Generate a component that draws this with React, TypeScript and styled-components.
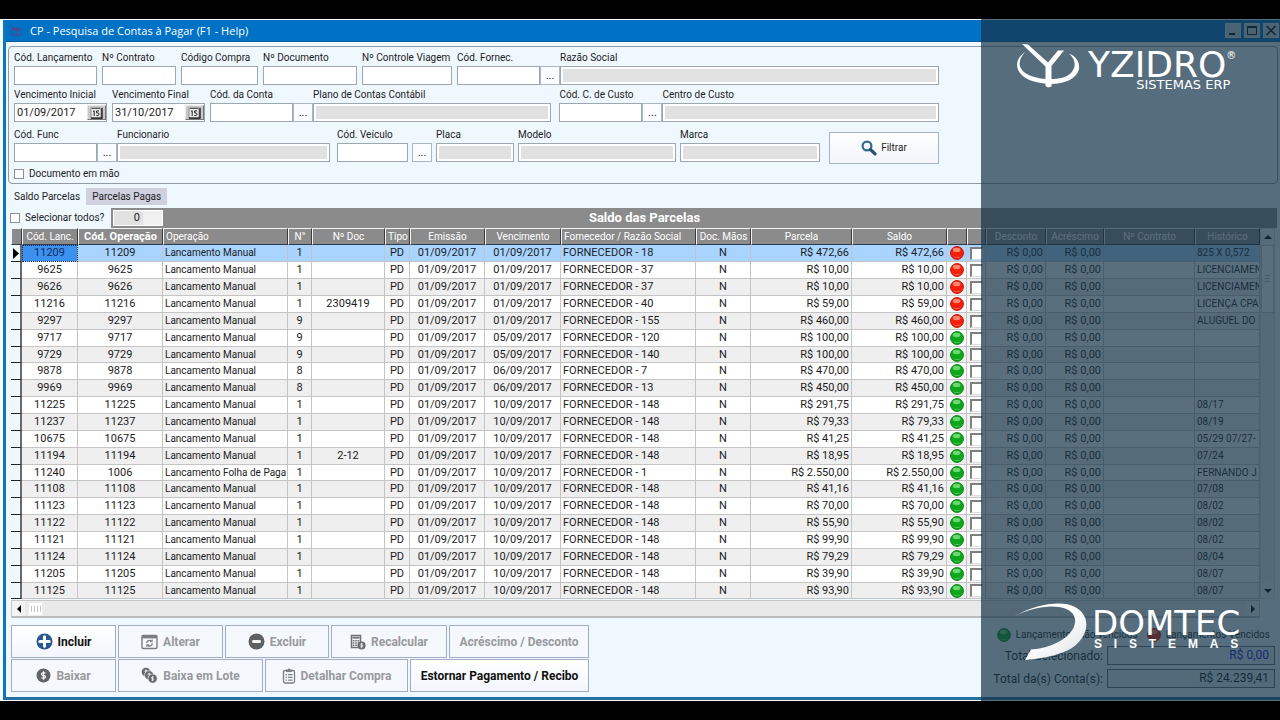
import React from 'react';
import styled, { createGlobalStyle, css } from 'styled-components';

const GlobalStyle = createGlobalStyle`
  * { box-sizing: border-box; }
  body {
    margin: 0;
    background: #000;
    color: #1c1c1c;
    font: 10px/14px Roboto, "Liberation Sans", sans-serif;
  }
  button, input { font: inherit; color: inherit; margin: 0; }
`;

const Stage = styled.main`
  position: relative;
  display: flex;
  min-height: 100vh;
  padding: 19px 0;
  overflow: hidden;
`;

const Window = styled.section`
  flex: 1;
  min-width: 0;
  padding: 1px 0 1px 3px;
  background: #f4fbff;
`;

const Frame = styled.div`
  display: flex;
  flex-direction: column;
  height: 100%;
  border-left: 3px solid #0f76ba;
  border-bottom: 3px solid #256f9e;
  background: #f0f8ff;
`;

const TitleBar = styled.header`
  display: flex;
  align-items: center;
  gap: 7px;
  height: 22px;
  padding: 0 0 0 4px;
  border-bottom: 1px solid #0a5c9c;
  background: #0072c6;
  color: #fff;
`;

const Title = styled.h1`
  flex: 1;
  margin: 0;
  font: 400 11px/16px "Open Sans", "Noto Sans", sans-serif;
`;

const Controls = styled.div`
  display: flex;
  gap: 3px;
  padding-right: 1px;
`;

const ControlButton = styled.button`
  display: block;
  width: 16px;
  height: 15px;
  padding: 0;
  border: 1px solid #e0e0e0;
  background: #c9d4dc;
  color: #000;
`;

const FilterPanel = styled.form`
  position: relative;
  margin: 4px 2px 0;
  padding: 4px 338px 2px 5px;
  border: 1px solid #8f9ba6;
  border-radius: 4px;
`;

const FieldRow = styled.div<{ $gap: number; $top?: number }>`
  display: flex;
  align-items: flex-end;
  gap: ${(p) => p.$gap}px;
  margin-top: ${(p) => p.$top ?? 0}px;
`;

const FieldBox = styled.div<{ $width?: number; $grow?: number }>`
  flex: ${(p) => (p.$grow ? `${p.$grow} 1 0` : `0 0 ${p.$width}px`)};
  min-width: 0;
`;

const Label = styled.label`
  display: block;
  height: 15px;
  line-height: 14px;
  white-space: nowrap;
`;

const TextInput = styled.input`
  display: block;
  width: 100%;
  height: 19px;
  padding: 2px;
  border: 1px solid #9ba7b3;
  border-radius: 0;
  background: #fff;
  outline: none;
  &:read-only {
    background: #e1e1e1 content-box;
    box-shadow: inset 0 0 0 2px #fff;
  }
`;

const DateBox = styled.div`
  display: flex;
  align-items: center;
  height: 19px;
  border: 1px solid #9ba7b3;
  background: #fff;
`;

const DateInput = styled.input`
  flex: 1;
  min-width: 0;
  padding: 0 0 0 2px;
  border: 0;
  background: none;
  font-size: 11px;
`;

const DateButton = styled.button`
  width: 19px;
  height: 15px;
  padding: 0;
  border: 1px solid #e8e8e8;
  border-right-color: #777;
  border-bottom-color: #777;
  background: #c9c9c9;
  svg { display: block; margin: auto; }
`;

const Lookup = styled.div<{ $grow: number }>`
  display: flex;
  align-items: flex-end;
  flex: ${(p) => p.$grow} 1 ${(p) => p.$grow}px;
  min-width: 0;
  &:not(:last-child) { margin-right: 3px; }
`;

const MoreButton = styled.button`
  flex: none;
  width: 20px;
  height: 19px;
  padding: 0;
  border: 1px solid #a9b6cc;
  background: #fbfcff;
  font-size: 11px;
  line-height: 14px;
`;

const FilterButton = styled.button`
  display: flex;
  align-items: center;
  justify-content: center;
  gap: 4px;
  width: 110px;
  height: 32px;
  margin: -8px 0 -2px 5px;
  border: 1px solid #a3b1c9;
  background: linear-gradient(#fff, #f3f5fb);
`;

const CheckLabel = styled.label`
  display: flex;
  align-items: center;
  gap: 5px;
`;

const CheckBox = styled.input`
  appearance: none;
  flex: none;
  width: 10px;
  height: 10px;
  border: 1px solid #8a939c;
  background: #fff;
`;

const DocumentCheck = styled(CheckLabel)`
  margin-top: 5px;
`;

const Tabs = styled.div`
  display: flex;
  margin: 4px 0 3px 2px;
`;

const Tab = styled.button<{ $muted?: boolean }>`
  height: 17px;
  padding: 0 6px;
  border: 0;
  background: ${(p) => (p.$muted ? '#d0d1df' : 'transparent')};
`;

const Band = styled.div`
  display: flex;
  align-items: center;
  height: 20px;
  margin: 0 3px 0 2px;
  background: #8b8b8b;
`;

const SelectAll = styled(CheckLabel)`
  width: 103px;
  height: 20px;
  padding-left: 2px;
  background: #f0f8ff;
  white-space: nowrap;
`;

const Counter = styled.output`
  width: 50px;
  height: 16px;
  margin-left: 2px;
  padding-right: 22px;
  border: 1px solid #fff;
  background: linear-gradient(90deg, #e2e2e2 29px, #f0f0f0 29px);
  font-size: 11px;
  text-align: right;
`;

const BandTitle = styled.h2`
  flex: 1;
  margin: 0;
  padding-right: 151px;
  color: #fff;
  font-size: 13px;
  font-weight: 700;
  line-height: 18px;
  text-align: center;
`;

const GridArea = styled.div`
  display: flex;
  margin: 0 5px;
`;

const GridTable = styled.table`
  flex: 1;
  width: 100%;
  min-width: 0;
  table-layout: fixed;
  border-collapse: separate;
  border-spacing: 0;
`;

type Align = 'left' | 'center' | 'right';

const HeadCell = styled.th<{ $align?: Align; $bold?: boolean }>`
  height: 17px;
  padding: 0 2px;
  overflow: hidden;
  border: 1px solid #f4f4f4;
  border-right: 1px solid #3c3c3c;
  border-bottom: 1px solid #2c3a4c;
  background: #8b8b8b;
  color: #fff;
  font-size: ${(p) => (p.$bold ? 11 : 10)}px;
  font-weight: ${(p) => (p.$bold ? 700 : 400)};
  line-height: 14px;
  text-align: ${(p) => p.$align ?? 'center'};
  white-space: nowrap;
`;

const Row = styled.tr<{ $selected?: boolean; $short?: boolean }>`
  height: ${(p) => (p.$short ? 16 : 17)}px;
  background: #fff;
  &:nth-child(odd) { background: #efefef; }
  ${(p) => p.$selected && css`&&:nth-child(odd) { background: #a8d4ff; }`}
`;

const Cell = styled.td<{ $align?: Align; $focused?: boolean }>`
  padding: 0 2px;
  overflow: hidden;
  border-right: 1px solid #c4c4c4;
  border-bottom: 1px solid #c4c4c4;
  font-size: 11px;
  line-height: 14px;
  text-align: ${(p) => p.$align ?? 'center'};
  white-space: nowrap;
  ${(p) =>
    p.$focused &&
    css`
      background: #3c90f0;
      outline: 1px dotted #10305c;
      outline-offset: -1px;
      color: #10305c;
    `}
`;

const TextCell = styled(Cell)`
  padding-right: 0;
  font-size: 10px;
`;

const Indicator = styled.td`
  padding: 0;
  border-right: 2px solid #6a6a6a;
  border-bottom: 1px solid #222;
  background: #f0f8ff;
  svg { display: block; margin: auto; }
`;

const IconCell = styled(Cell)`
  padding: 0;
  svg { display: block; margin: auto; }
`;

const RowCheck = styled.input`
  appearance: none;
  display: block;
  width: 13px;
  height: 13px;
  margin: 0 0 0 3px;
  border: 1px solid #777;
  border-width: 2px 1px 1px 2px;
  border-color: #808080 #ddd #ddd #808080;
  background: #fff;
`;

const VScroll = styled.div`
  display: flex;
  flex: none;
  flex-direction: column;
  justify-content: space-between;
  align-items: center;
  width: 15px;
  border: 1px solid #d8d8d8;
  background: #ececec;
`;

const ScrollButton = styled.button`
  display: grid;
  place-items: center;
  width: 13px;
  height: 15px;
  padding: 0;
  border: 0;
  background: #f4f4f4;
`;

const VThumb = styled.div`
  width: 13px;
  height: 68px;
  margin: 1px 0 auto;
  border: 1px solid #ccc;
  background: repeating-linear-gradient(#bbb 0 1px, #fff 1px 3px) center / 5px 8px no-repeat #fff;
`;

const HScroll = styled.div`
  display: flex;
  justify-content: space-between;
  align-items: center;
  height: 18px;
  margin: 1px 20px 0 5px;
  border: 1px solid #c6c6c6;
  border-bottom: 2px solid #b9bcbc;
  background: #e9e9e9;
`;

const HThumb = styled.div`
  width: 15px;
  height: 14px;
  margin: 0 auto 0 3px;
  border: 1px solid #eee;
  background: repeating-linear-gradient(90deg, #c4c4c4 0 1px, #fff 1px 3px) center / 10px 6px no-repeat #fff;
`;

const Footer = styled.footer`
  display: flex;
  justify-content: space-between;
  margin: 7px 5px 0;
`;

const Actions = styled.div`
  display: flex;
  flex-direction: column;
  gap: 1px;
`;

const ActionRow = styled.div`
  display: flex;
  gap: 2px;
`;

const ActionButton = styled.button<{ $width: number }>`
  display: flex;
  align-items: center;
  justify-content: center;
  gap: 5px;
  width: ${(p) => p.$width}px;
  height: 33px;
  padding: 0;
  border: 1px solid #a5acc6;
  background: linear-gradient(#fff, #f3f6fc);
  color: #111;
  font-size: 12px;
  font-weight: 700;
  white-space: nowrap;
  &:disabled { background: #f5f8fd; color: #98999c; }
`;

const Summary = styled.div`
  display: grid;
  grid-template-columns: auto 168px;
  column-gap: 4px;
  row-gap: 4px;
  align-content: start;
  align-items: center;
`;

const Legend = styled.div`
  display: flex;
  grid-column: 1 / -1;
  gap: 9px;
  justify-content: flex-end;
  height: 17px;
  padding: 3px 5px 0 0;
`;

const LegendItem = styled.span`
  display: flex;
  align-items: center;
  gap: 5px;
  white-space: nowrap;
`;

const TotalLabel = styled.label`
  font-size: 12px;
  line-height: 18px;
  text-align: right;
`;

const TotalValue = styled.output<{ $blue?: boolean }>`
  height: 19px;
  padding-right: 5px;
  border: 1px solid #5f6970;
  background: #e6eef5;
  color: ${(p) => (p.$blue ? '#1414e0' : '#111')};
  font-size: 12px;
  line-height: 16px;
  text-align: right;
`;

const Overlay = styled.aside`
  position: absolute;
  top: 19px;
  right: 0;
  bottom: 19px;
  width: 299px;
  display: flex;
  flex-direction: column;
  justify-content: space-between;
  padding: 24px 20px 39px 33px;
  background: rgba(22, 52, 72, 0.71);
  color: #fff;
  pointer-events: none;
`;

const Brand = styled.div`
  display: flex;
  font-family: "DejaVu Sans", sans-serif;
`;

const Wordmark = styled.div<{ $top: number }>`
  display: flex;
  flex-direction: column;
  padding-top: ${(p) => p.$top}px;
`;

const BrandName = styled.div`
  display: flex;
  font-size: 36px;
  line-height: 28px;
`;

const Registered = styled.sup`
  font-size: 10px;
  line-height: 10px;
`;

const BrandLine = styled.div`
  padding-right: 6px;
  font-size: 13px;
  line-height: 12px;
  text-align: right;
`;

const DomtecName = styled(BrandName)`
  font-size: 34px;
`;

const SpacedLine = styled.div`
  display: flex;
  justify-content: space-between;
  padding: 0 2px;
  font: 700 12px/14px "Liberation Sans", sans-serif;
`;

const Ball = ({ color }: { color: 'red' | 'green' }) => {
  const dark = color === 'red' ? '#c80d00' : '#06820f';
  const base = color === 'red' ? '#f5200c' : '#0ca81c';
  const shine = color === 'red' ? '#ff9a80' : '#7ee07c';
  return (
    <svg width="14" height="14" viewBox="0 0 14 14" aria-hidden="true">
      <circle cx="7" cy="7" r="6.4" fill={base} stroke={dark} />
      <ellipse cx="6.6" cy="4" rx="3.8" ry="2.2" fill={shine} opacity="0.85" />
      <path d="M3 10.4Q7 13.4 11 10.4Q7 11.6 3 10.4Z" fill={shine} opacity="0.6" />
    </svg>
  );
};

const Arrow = ({ d }: { d: string }) => (
  <svg width="8" height="8" viewBox="0 0 8 8" aria-hidden="true">
    <path d={d} fill="#000" />
  </svg>
);

const RowPointer = () => (
  <svg width="7" height="11" viewBox="0 0 7 11" aria-hidden="true">
    <path d="M1 0l6 5.5-6 5.5z" fill="#000" />
  </svg>
);

const CalendarGlyph = () => (
  <svg width="13" height="12" viewBox="0 0 13 12" aria-hidden="true">
    <path d="M1 1h10v10H1z" fill="#ececec" stroke="#888" />
    <path d="M1 11.2h11V1" fill="none" stroke="#111" strokeWidth="1.3" />
    <path d="M2 1.5h8" stroke="#555" />
    <path d="M3 4.5l1.2-.8V9M9 3.9H6.6v2H8q1 .2 1 1.3T7.8 8.6H6.3" fill="none" stroke="#222" />
  </svg>
);

const SearchIcon = () => (
  <svg width="16" height="16" viewBox="0 0 16 16" fill="none" aria-hidden="true">
    <circle cx="6" cy="6" r="4.4" stroke="#34698f" strokeWidth="2.2" />
    <path d="M9.6 9.6l4.4 4.3" stroke="#274f75" strokeWidth="3.2" strokeLinecap="round" />
  </svg>
);

const PlusIcon = () => (
  <svg width="17" height="17" viewBox="0 0 17 17" aria-hidden="true">
    <circle cx="8.5" cy="8.5" r="8" fill="#27588f" />
    <path d="M8.5 3.8v9.4M3.8 8.5h9.4" stroke="#fff" strokeWidth="3" strokeLinecap="round" />
  </svg>
);

const MinusIcon = () => (
  <svg width="17" height="17" viewBox="0 0 17 17" aria-hidden="true">
    <circle cx="8.5" cy="8.5" r="8" fill="#5f6062" />
    <path d="M4.3 8.5h8.4" stroke="#fff" strokeWidth="2.8" />
  </svg>
);

const EditIcon = () => (
  <svg width="17" height="16" viewBox="0 0 17 16" fill="none" stroke="#7c7d80" aria-hidden="true">
    <rect x="1" y="1.5" width="15" height="13" rx="1" strokeWidth="1.4" />
    <path d="M1 3.2h15" strokeWidth="2.4" />
    <path d="M5.6 9a3 3 0 0 1 5-1.8M11.4 9.4a3 3 0 0 1-5 1.8" strokeWidth="1.3" />
    <path d="M11.2 5.4v2.3H9M5.8 13v-2.3H8" strokeWidth="1" />
  </svg>
);

const CalcIcon = () => (
  <svg width="16" height="16" viewBox="0 0 16 16" fill="none" aria-hidden="true">
    <path d="M1.5 1.5h9v12h-9z" stroke="#6f7073" strokeWidth="1.5" />
    <path d="M2.5 3.7h7" stroke="#6f7073" strokeWidth="1.8" />
    <path d="M2.8 6.7h6.6M2.8 9h6.6M2.8 11.3h6.6" stroke="#6f7073" strokeWidth="1.4" strokeDasharray="1.6 0.8" />
    <circle cx="11.6" cy="11.5" r="4" fill="#6a6b6e" />
    <path d="M12.9 10q-2.6-.9-2.6.5t2.6.9q.6 2-2.6 1.5M11.6 8.8v5.4" stroke="#eee" strokeWidth="0.8" />
  </svg>
);

const coinMark = 'M2 -2.3Q-2 -3.6 -2 -1.4Q-1.8 0 0 0Q2 .2 2 1.6Q1.6 3.3 -2 2.3M0 -4.2v8.4';

const CoinIcon = () => (
  <svg width="15" height="15" viewBox="0 0 15 15" fill="none" aria-hidden="true">
    <circle cx="7.5" cy="7.5" r="7" fill="#626366" />
    <path d={coinMark} transform="translate(7.5 7.5)" stroke="#f4f4f4" strokeWidth="1.3" />
  </svg>
);

const CoinsIcon = () => (
  <svg width="17" height="17" viewBox="0 0 17 17" fill="none" aria-hidden="true">
    {[[5, 5], [8.2, 8.3], [11.6, 11.6]].map(([x, y]) => (
      <g key={x} transform={`translate(${x} ${y})`}>
        <circle r="4.6" fill="#66676a" stroke="#f5f8fd" strokeWidth="0.6" />
        <path d={coinMark} transform="scale(0.62)" stroke="#f4f4f4" strokeWidth="1.3" />
      </g>
    ))}
  </svg>
);

const ClipboardIcon = () => (
  <svg width="14" height="16" viewBox="0 0 14 16" fill="none" stroke="#7c7d80" aria-hidden="true">
    <rect x="1.5" y="2.5" width="11" height="12.5" rx="1.5" strokeWidth="1.3" />
    <path d="M4.5 3.6V1.9h1.3Q7 -.4 8.2 1.9h1.3v1.7z" fill="#7c7d80" />
    <path d="M6 6.7h4.5M6 9.4h4.5M6 12.1h4.5" strokeWidth="1.2" />
    <path d="M3.6 6.7h1.3M3.6 9.4h1.3M3.6 12.1h1.3" strokeWidth="1.4" />
  </svg>
);

const YzidroSymbol = () => (
  <svg width="74" height="46" viewBox="0 0 74 46" fill="#fff" aria-hidden="true">
    <path d="M11 9C-2 18 1 33 20 38.5C39 44 62 40 65 26C66 18 61 13 55 10.5C63 17 63 28 52 33.5C40 38 23 36.5 13 31C3 25 4 17 11 9Z" />
    <path d="M8 1L14 1.5L34 19.5L44 7.5H50L37.5 23V43.5L34 44.5L31.5 43V23.5Z" />
  </svg>
);

const DomtecSymbol = () => (
  <svg width="78" height="60" viewBox="0 0 78 60" aria-hidden="true">
    <defs>
      <linearGradient id="swoosh" x1="0" y1="0" x2="1" y2="1">
        <stop offset="0.5" stopColor="#fff" />
        <stop offset="1" stopColor="#d9dde0" />
      </linearGradient>
    </defs>
    <path
      d="M1 14C22 2 48 -2 61 5C76 13 76 30 62 43C50 53 31 56 11 58L17 47.5C37 46 52 38 59 27C65 15 58 7 45 5C31 3 15 7 1 14Z"
      fill="url(#swoosh)"
    />
  </svg>
);

type FieldProps = {
  id: string;
  label: string;
  width?: number;
  grow?: number;
  readOnly?: boolean;
};

const Field = ({ id, label, width, grow, readOnly }: FieldProps) => (
  <FieldBox $width={width} $grow={grow}>
    <Label htmlFor={id}>{label}</Label>
    <TextInput id={id} readOnly={readOnly} />
  </FieldBox>
);

const DateField = ({ id, label, value }: { id: string; label: string; value: string }) => (
  <FieldBox $width={93}>
    <Label htmlFor={id}>{label}</Label>
    <DateBox>
      <DateInput id={id} defaultValue={value} />
      <DateButton type="button" aria-label="Abrir calendário">
        <CalendarGlyph />
      </DateButton>
    </DateBox>
  </FieldBox>
);

type LookupProps = { id: string; code: string; name: string; grow: number };

const LookupField = ({ id, code, name, grow }: LookupProps) => (
  <Lookup $grow={grow}>
    <Field id={`${id}-codigo`} label={code} width={83} />
    <MoreButton type="button" aria-label={`Buscar ${name}`}>...</MoreButton>
    <Field id={`${id}-nome`} label={name} grow={1} readOnly />
  </Lookup>
);

type Column = { title: string; width?: number; align?: Align; bold?: boolean };

const columns: Column[] = [
  { title: '', width: 11 },
  { title: 'Cód. Lanc.', width: 56 },
  { title: 'Cód. Operação', width: 85, bold: true },
  { title: 'Operação', width: 125, align: 'left' },
  { title: 'N°', width: 24 },
  { title: 'Nº Doc', width: 73 },
  { title: 'Tipo', width: 25 },
  { title: 'Emissão', width: 75 },
  { title: 'Vencimento', width: 76 },
  { title: 'Fornecedor / Razão Social', width: 135, align: 'left' },
  { title: 'Doc. Mãos', width: 55 },
  { title: 'Parcela', width: 101 },
  { title: 'Saldo', width: 95 },
  { title: '', width: 20 },
  { title: '', width: 19 },
  { title: 'Desconto', width: 60 },
  { title: 'Acréscimo', width: 58 },
  { title: 'Nº Contrato', width: 91 },
  { title: 'Histórico' },
];

type Entry = [code: string, op: string, n: string, doc: string, due: string, supplier: string, value: string, note: string];

const entries: Entry[] = [
  ['11209', '11209', '1', '', '01/09/2017', '18', '472,66', '825 X 0,572'],
  ['9625', '9625', '1', '', '01/09/2017', '37', '10,00', 'LICENCIAMEN'],
  ['9626', '9626', '1', '', '01/09/2017', '37', '10,00', 'LICENCIAMEN'],
  ['11216', '11216', '1', '2309419', '01/09/2017', '40', '59,00', 'LICENÇA CPA'],
  ['9297', '9297', '9', '', '01/09/2017', '155', '460,00', 'ALUGUEL DO'],
  ['9717', '9717', '9', '', '05/09/2017', '120', '100,00', ''],
  ['9729', '9729', '9', '', '05/09/2017', '140', '100,00', ''],
  ['9878', '9878', '8', '', '06/09/2017', '7', '470,00', ''],
  ['9969', '9969', '8', '', '06/09/2017', '13', '450,00', ''],
  ['11225', '11225', '1', '', '10/09/2017', '148', '291,75', '08/17'],
  ['11237', '11237', '1', '', '10/09/2017', '148', '79,33', '08/19'],
  ['10675', '10675', '1', '', '10/09/2017', '148', '41,25', '05/29 07/27-'],
  ['11194', '11194', '1', '2-12', '10/09/2017', '148', '18,95', '07/24'],
  ['11240', '1006', '1', '', '10/09/2017', '1', '2.550,00', 'FERNANDO J'],
  ['11108', '11108', '1', '', '10/09/2017', '148', '41,16', '07/08'],
  ['11123', '11123', '1', '', '10/09/2017', '148', '70,00', '08/02'],
  ['11122', '11122', '1', '', '10/09/2017', '148', '55,90', '08/02'],
  ['11121', '11121', '1', '', '10/09/2017', '148', '99,90', '08/02'],
  ['11124', '11124', '1', '', '10/09/2017', '148', '79,29', '08/04'],
  ['11205', '11205', '1', '', '10/09/2017', '148', '39,90', '08/07'],
  ['11125', '11125', '1', '', '10/09/2017', '148', '93,90', '08/07'],
];

const EntryRow = ({ entry, index }: { entry: Entry; index: number }) => {
  const [code, op, n, doc, due, supplier, value, note] = entry;
  const selected = index === 0;
  return (
    <Row $selected={selected} $short={index % 7 === 6}>
      <Indicator>{selected && <RowPointer />}</Indicator>
      <Cell $focused={selected}>{code}</Cell>
      <Cell>{op}</Cell>
      <TextCell $align="left">{op === '1006' ? 'Lancamento Folha de Paga' : 'Lancamento Manual'}</TextCell>
      <Cell>{n}</Cell>
      <Cell>{doc}</Cell>
      <Cell>PD</Cell>
      <Cell>01/09/2017</Cell>
      <Cell>{due}</Cell>
      <Cell $align="left">FORNECEDOR - {supplier}</Cell>
      <Cell>N</Cell>
      <Cell $align="right">R$ {value}</Cell>
      <Cell $align="right">R$ {value}</Cell>
      <IconCell><Ball color={index < 5 ? 'red' : 'green'} /></IconCell>
      <IconCell><RowCheck type="checkbox" aria-label={`Selecionar ${code}`} /></IconCell>
      <Cell $align="right">R$ 0,00</Cell>
      <Cell $align="right">R$ 0,00</Cell>
      <Cell />
      <TextCell $align="left">{note}</TextCell>
    </Row>
  );
};

export default function App() {
  return (
    <Stage>
      <GlobalStyle />
      <Window>
        <Frame>
          <TitleBar>
            <svg width="13" height="12" viewBox="0 0 13 12" fill="none" aria-hidden="true">
              <ellipse cx="6.5" cy="7" rx="5.5" ry="3.8" stroke="#3a4f9c" strokeWidth="1.2" />
              <path d="M2 2l4.5 4L10 3M6.5 6v4.5" stroke="#6c3f78" strokeWidth="1.5" />
            </svg>
            <Title>CP - Pesquisa de Contas à Pagar (F1 - Help)</Title>
            <Controls>
              <ControlButton aria-label="Minimizar">
                <svg width="14" height="13" viewBox="0 0 14 13"><path d="M3 10h6" stroke="#000" strokeWidth="2" /></svg>
              </ControlButton>
              <ControlButton aria-label="Maximizar">
                <svg width="14" height="13" viewBox="0 0 14 13" fill="none" stroke="#000"><path d="M2.5 2.5h9v8h-9zM2.5 3.5h9" /></svg>
              </ControlButton>
              <ControlButton aria-label="Fechar">
                <svg width="14" height="13" viewBox="0 0 14 13" stroke="#000" strokeWidth="1.5"><path d="M2.5 2l9 9M11.5 2l-9 9" /></svg>
              </ControlButton>
            </Controls>
          </TitleBar>

          <FilterPanel>
            <FieldRow $gap={5}>
              <Field id="lancamento" label="Cód. Lançamento" width={83} />
              <Field id="contrato" label="Nº Contrato" width={74} />
              <Field id="compra" label="Código Compra" width={77} />
              <Field id="documento" label="Nº Documento" width={94} />
              <Field id="viagem" label="Nº Controle Viagem" width={90} />
              <LookupField id="fornecedor" code="Cód. Fornec." name="Razão Social" grow={481} />
            </FieldRow>
            <FieldRow $gap={5} $top={3}>
              <DateField id="venc-inicial" label="Vencimento Inicial" value="01/09/2017" />
              <DateField id="venc-final" label="Vencimento Final" value="31/10/2017" />
              <LookupField id="conta" code="Cód. da Conta" name="Plano de Contas Contábil" grow={341} />
              <LookupField id="custo" code="Cód. C. de Custo" name="Centro de Custo" grow={379} />
            </FieldRow>
            <FieldRow $gap={4} $top={6}>
              <LookupField id="func" code="Cód. Func" name="Funcionario" grow={316} />
              <Field id="veiculo" label="Cód. Veículo" width={71} />
              <MoreButton type="button" aria-label="Buscar veículo">...</MoreButton>
              <Field id="placa" label="Placa" width={78} readOnly />
              <Field id="modelo" label="Modelo" width={158} readOnly />
              <Field id="marca" label="Marca" width={140} readOnly />
              <FilterButton type="button">
                <SearchIcon />
                Filtrar
              </FilterButton>
            </FieldRow>
            <DocumentCheck>
              <CheckBox type="checkbox" />
              Documento em mão
            </DocumentCheck>
          </FilterPanel>

          <Tabs role="tablist">
            <Tab role="tab" aria-selected="true">Saldo Parcelas</Tab>
            <Tab role="tab" aria-selected="false" $muted>Parcelas Pagas</Tab>
          </Tabs>

          <Band>
            <SelectAll>
              <CheckBox type="checkbox" />
              Selecionar todos?
            </SelectAll>
            <Counter>0</Counter>
            <BandTitle>Saldo das Parcelas</BandTitle>
          </Band>

          <GridArea>
            <GridTable>
              <colgroup>
                {columns.map((c, i) => <col key={i} width={c.width} />)}
              </colgroup>
              <thead>
                <tr>
                  {columns.map((c, i) => (
                    <HeadCell key={i} $align={c.align} $bold={c.bold}>{c.title}</HeadCell>
                  ))}
                </tr>
              </thead>
              <tbody>
                {entries.map((entry, i) => <EntryRow key={entry[0]} entry={entry} index={i} />)}
              </tbody>
            </GridTable>
            <VScroll>
              <ScrollButton aria-label="Rolar para cima"><Arrow d="M0 6l4-4 4 4z" /></ScrollButton>
              <VThumb />
              <ScrollButton aria-label="Rolar para baixo"><Arrow d="M0 2l4 4 4-4z" /></ScrollButton>
            </VScroll>
          </GridArea>
          <HScroll>
            <ScrollButton aria-label="Rolar para a esquerda"><Arrow d="M6 0L2 4l4 4z" /></ScrollButton>
            <HThumb />
            <ScrollButton aria-label="Rolar para a direita"><Arrow d="M2 0l4 4-4 4z" /></ScrollButton>
          </HScroll>

          <Footer>
            <Actions>
              <ActionRow>
                <ActionButton $width={105}><PlusIcon />Incluir</ActionButton>
                <ActionButton $width={105} disabled><EditIcon />Alterar</ActionButton>
                <ActionButton $width={104} disabled><MinusIcon />Excluir</ActionButton>
                <ActionButton $width={116} disabled><CalcIcon />Recalcular</ActionButton>
                <ActionButton $width={140} disabled>Acréscimo / Desconto</ActionButton>
              </ActionRow>
              <ActionRow>
                <ActionButton $width={105} disabled><CoinIcon />Baixar</ActionButton>
                <ActionButton $width={145} disabled><CoinsIcon />Baixa em Lote</ActionButton>
                <ActionButton $width={143} disabled><ClipboardIcon />Detalhar Compra</ActionButton>
                <ActionButton $width={179}>Estornar Pagamento / Recibo</ActionButton>
              </ActionRow>
            </Actions>
            <Summary>
              <Legend>
                <LegendItem><Ball color="green" />Lançamentos não vencidos</LegendItem>
                <LegendItem><Ball color="red" />Lançamentos Vencidos</LegendItem>
              </Legend>
              <TotalLabel htmlFor="total-selecionado">Total Selecionado:</TotalLabel>
              <TotalValue id="total-selecionado" $blue>R$ 0,00</TotalValue>
              <TotalLabel htmlFor="total-contas">Total da(s) Conta(s):</TotalLabel>
              <TotalValue id="total-contas">R$ 24.239,41</TotalValue>
            </Summary>
          </Footer>
        </Frame>
      </Window>

      <Overlay>
        <Brand>
          <YzidroSymbol />
          <Wordmark $top={8}>
            <BrandName>YZIDRO<Registered>®</Registered></BrandName>
            <BrandLine>SISTEMAS ERP</BrandLine>
          </Wordmark>
        </Brand>
        <Brand>
          <DomtecSymbol />
          <Wordmark $top={7}>
            <DomtecName>DOMTEC</DomtecName>
            <SpacedLine>
              {'SISTEMAS'.split('').map((letter, i) => <span key={i}>{letter}</span>)}
            </SpacedLine>
          </Wordmark>
        </Brand>
      </Overlay>
    </Stage>
  );
}
